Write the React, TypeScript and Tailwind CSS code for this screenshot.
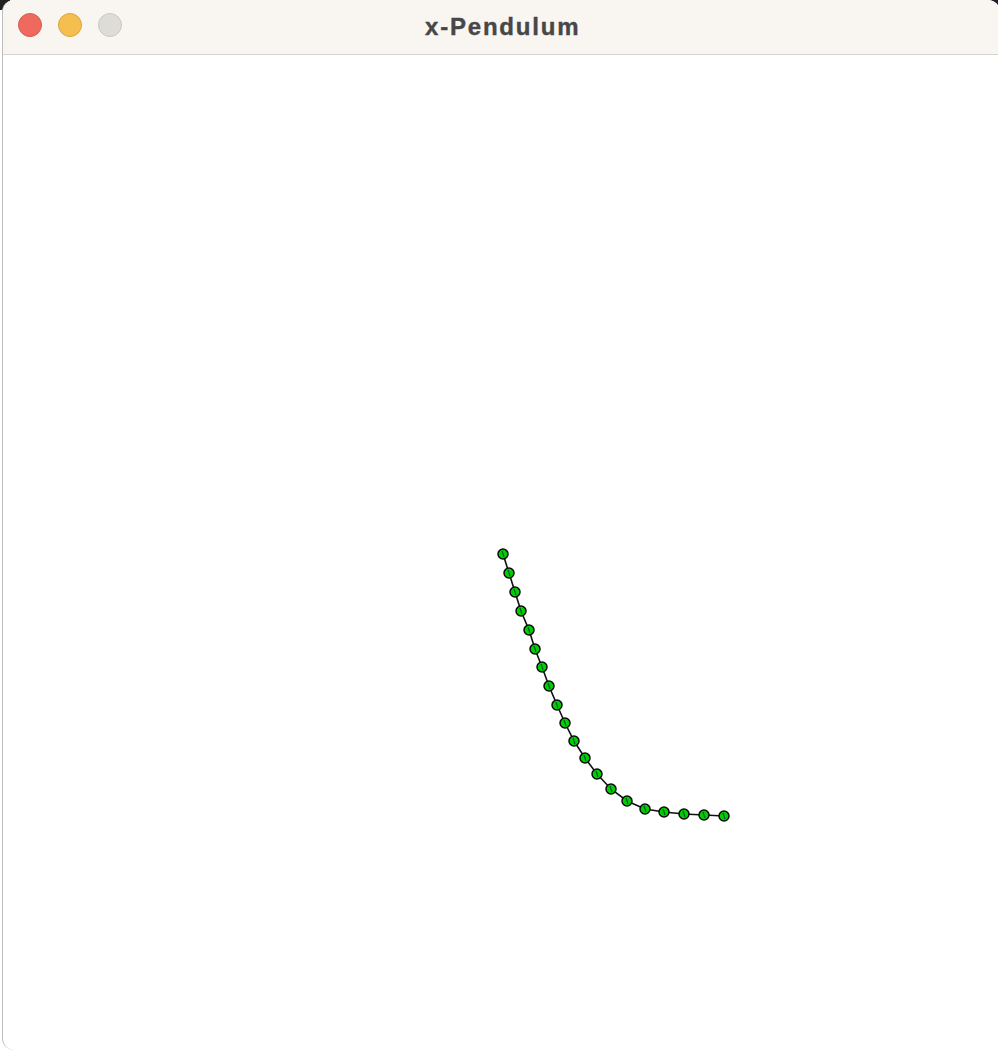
import React from "react";

const pts: [number, number][] = [
  [502, 554], [508, 573], [514, 592], [520, 611], [528, 630], [534, 649],
  [541, 667], [548, 686], [556, 705], [564, 723], [573, 741], [584, 758],
  [596, 774], [610, 789], [626, 801], [644, 809], [663, 812], [683, 814],
  [703, 815], [723, 816],
];

export default function App() {
  const top = 55;
  const line = pts.map(([x, y]) => `${x},${y - top}`).join(" ");
  return (
    <div className="w-[998px] h-[1050px] bg-white overflow-hidden relative" style={{ fontFamily: '"Liberation Sans", Arial, sans-serif' }}>
      <div className="absolute left-0 top-0 w-[10px] h-[10px] bg-[#222]" />
      <div className="absolute right-0 top-0 w-[12px] h-[12px] bg-[#1c1f26]" />
      <div className="ml-[2px] w-[998px] h-[1050px] rounded-tl-[12px] rounded-tr-[12px] rounded-bl-[12px] border-l border-[#bdbdbd] bg-white overflow-hidden relative flex flex-col">
        <div className="h-[55px] shrink-0 bg-[#f9f6f2] border-b border-[#d6d4d2] flex items-center relative">
          <div className="flex gap-[16px] pl-[15px] -mt-[4px]">
            <div className="w-[24px] h-[24px] rounded-full bg-[#ee6a5f] border border-[#d65a50]" />
            <div className="w-[24px] h-[24px] rounded-full bg-[#f5bf4f] border border-[#d9a43f]" />
            <div className="w-[24px] h-[24px] rounded-full bg-[#dedcd8] border border-[#c9c7c3]" />
          </div>
          <div className="absolute left-[422px] top-[9px] text-[24px] font-bold text-[#474747] tracking-[1.8px] [-webkit-text-stroke:0.4px_#474747]">x-Pendulum</div>
        </div>
        <div className="flex-1 relative">
          <svg width="998" height="995" className="absolute left-[-2px] top-0">
            <polyline points={line} fill="none" stroke="#111" strokeWidth="1.6" />
            {pts.map(([x, y], i) => (
              <g key={i}>
                <circle cx={x} cy={y - top} r="5" fill="#00d000" stroke="#0a0a0a" strokeWidth="1.5" />
                <line x1={x - 1} y1={y - top - 3} x2={x + 1} y2={y - top + 3} stroke="#053" strokeWidth="1.2" />
              </g>
            ))}
          </svg>
        </div>
      </div>
    </div>
  );
}
